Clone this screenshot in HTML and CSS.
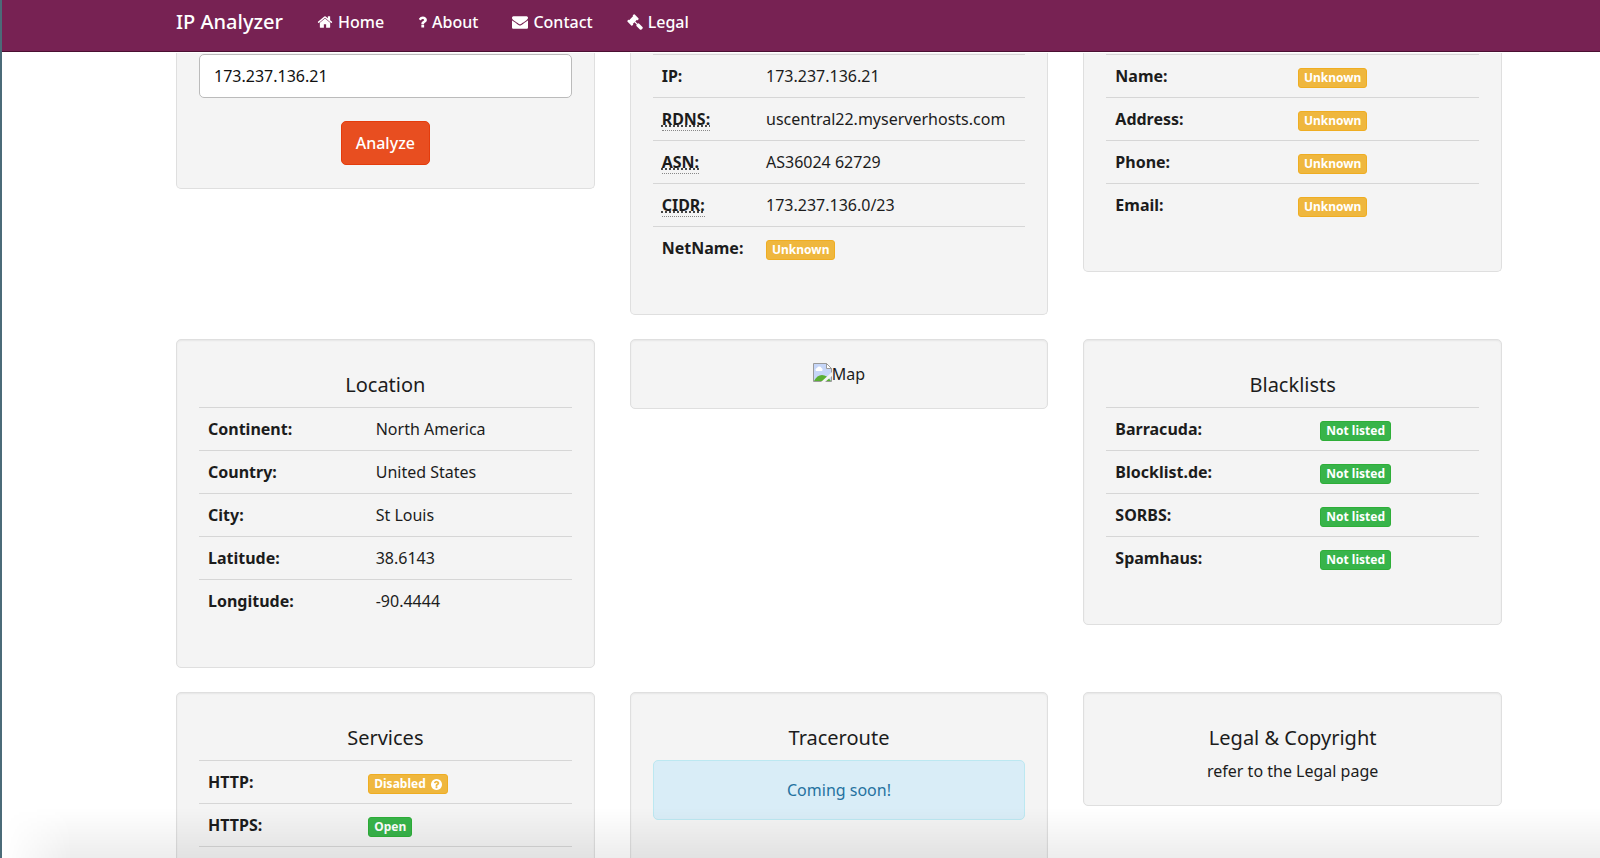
FILE: index.html
```html
<!DOCTYPE html>
<html lang="en">
<head>
<meta charset="utf-8">
<meta name="viewport" content="width=device-width, initial-scale=1">
<title>IP Analyzer</title>
<link rel="stylesheet" href="styles.css">
</head>
<body>
<header class="navbar">
  <a class="brand" href="#">IP Analyzer</a>
  <nav class="nav">
    <a class="nav-link" href="#"><svg class="icon" viewBox="0 0 1792 1792" aria-hidden="true"><path d="M1472 992v480q0 26-19 45t-45 19h-384v-384h-256v384h-384q-26 0-45-19t-19-45v-480q0-1 .5-3t.5-3l575-474 575 474q1 2 1 6zm223-69l-62 74q-8 9-21 11h-3q-13 0-21-7l-692-577-692 577q-12 8-24 7-13-2-21-11l-62-74q-8-10-7-23.500t11-21.500l719-599q32-26 76-26t76 26l244 204v-195q0-14 9-23t23-9h192q14 0 23 9t9 23v408l219 182q10 8 11 21.500t-7 23.500z"/></svg>Home</a>
    <a class="nav-link" href="#"><svg class="icon icon-narrow" viewBox="380 0 1040 1792" aria-hidden="true"><path d="M1088 1256v240q0 16-12 28t-28 12h-240q-16 0-28-12t-12-28v-240q0-16 12-28t28-12h240q16 0 28 12t12 28zm316-600q0 54-15.500 101t-35 76.500-55 59.500-57.500 43.500-61 35.500q-41 23-68.500 65t-27.500 67q0 17-12 32.500t-28 15.500h-240q-15 0-25.500-18.500t-10.500-37.500v-45q0-83 65-156.500t143-108.500q59-27 84-56t25-76q0-42-46.500-74t-107.500-32q-65 0-108 29-35 25-107 115-13 16-31 16-12 0-25-8l-164-125q-13-10-15.500-25t5.500-28q160-266 464-266 80 0 161 31t146 83 106 127.500 41 158.500z"/></svg>About</a>
    <a class="nav-link" href="#"><svg class="icon" viewBox="0 0 1792 1792" aria-hidden="true"><path d="M1792 710v794q0 66-47 113t-113 47h-1472q-66 0-113-47t-47-113v-794q44 49 101 87 362 246 497 345 57 42 92.500 65.500t94.500 48 110 24.500h2q51 0 110-24.500t94.500-48 92.500-65.500q170-123 498-345 57-39 100-87zm0-294q0 79-49 151t-122 123q-376 261-468 325-10 7-42.500 31t-54 38.500-52 32.500-57.500 27-50 9h-2q-23 0-50-9t-57.500-27-52-32.500-54-38.500-42.500-31q-91-64-262-182.500t-205-142.500q-62-42-117-115.500t-55-136.500q0-78 41.500-130t118.500-52h1472q65 0 112.500 47t47.500 113z"/></svg>Contact</a>
    <a class="nav-link" href="#"><svg class="icon" viewBox="0 0 1792 1792" aria-hidden="true"><path d="M1771 1536q0 53-37 90l-107 108q-39 37-91 37-53 0-90-37l-363-364q-38-36-38-90 0-53 43-96l-256-256-126 126q-14 14-34 14t-34-14q2 2 12.500 12t12.500 13 10 11.500 10 13.500 6 13.500 5.500 16.500 1.500 18q0 38-28 68-3 3-16.500 18t-19 20.500-18.500 16.500-22 15.500-22 9-26 4.500q-40 0-68-28l-408-408q-28-28-28-68 0-13 4.500-26t9-22 15.500-22 16.500-18.500 20.500-19 18-16.500q30-28 68-28 10 0 18 1.500t16.500 5.500 13.500 6 13.500 10 11.500 10 13 12.500 12 12.500q-14-14-14-34t14-34l348-348q14-14 34-14t34 14q-2-2-12.500-12t-12.500-13-10-11.500-10-13.500-6-13.500-5.500-16.500-1.500-18q0-38 28-68 3-3 16.500-18t19-20.500 18.500-16.500 22-15.500 22-9 26-4.500q40 0 68 28l408 408q28 28 28 68 0 13-4.500 26t-9 22-15.500 22-16.500 18.500-20.500 19-18 16.500q-30 28-68 28-10 0-18-1.500t-16.500-5.500-13.500-6-13.500-10-11.500-10-13-12.500-12-12.500q14 14 14 34t-14 34l-126 126 256 256q43-43 96-43 52 0 91 37l363 363q37 39 37 91z"/></svg>Legal</a>
  </nav>
</header>

<main class="cards">
  <form class="card card-cut analyze">
    <input class="ip-input" type="text" aria-label="IP address" value="173.237.136.21">
    <button class="btn" type="button">Analyze</button>
  </form>

  <section class="card card-cut">
    <table class="info cols-network">
      <tr><th scope="row">IP:</th><td>173.237.136.21</td></tr>
      <tr><th scope="row"><abbr title="Reverse DNS">RDNS:</abbr></th><td>uscentral22.myserverhosts.com</td></tr>
      <tr><th scope="row"><abbr title="Autonomous System Number">ASN:</abbr></th><td>AS36024 62729</td></tr>
      <tr><th scope="row"><abbr title="Classless Inter-Domain Routing">CIDR:</abbr></th><td>173.237.136.0/23</td></tr>
      <tr><th scope="row">NetName:</th><td><span class="label label-warning">Unknown</span></td></tr>
    </table>
  </section>

  <section class="card card-cut">
    <table class="info cols-contact">
      <tr><th scope="row">Name:</th><td><span class="label label-warning">Unknown</span></td></tr>
      <tr><th scope="row">Address:</th><td><span class="label label-warning">Unknown</span></td></tr>
      <tr><th scope="row">Phone:</th><td><span class="label label-warning">Unknown</span></td></tr>
      <tr><th scope="row">Email:</th><td><span class="label label-warning">Unknown</span></td></tr>
    </table>
  </section>

  <section class="card">
    <h2 class="title">Location</h2>
    <table class="info cols-location">
      <tr><th scope="row">Continent:</th><td>North America</td></tr>
      <tr><th scope="row">Country:</th><td>United States</td></tr>
      <tr><th scope="row">City:</th><td>St Louis</td></tr>
      <tr><th scope="row">Latitude:</th><td>38.6143</td></tr>
      <tr><th scope="row">Longitude:</th><td>-90.4444</td></tr>
    </table>
  </section>

  <section class="card">
    <div class="map">
      <svg class="map-icon" viewBox="0 0 19 19" aria-hidden="true">
        <path fill="#c6d6f8" stroke="#9a9a9a" d="M.5.500h13l5 5v13H.5z"/>
        <path fill="#fff" d="M3 8a2 2 0 0 1 1-3 2.500 2.500 0 0 1 4.500 0A1.800 1.800 0 0 1 9 8z"/>
        <path fill="#5aaf34" d="M1 18q3-6 8-6t9 6z"/>
        <path fill="#f4f4f4" d="M19 9v4l-7 6H8z"/>
        <path fill="#fff" stroke="#9a9a9a" d="M13.500.500v5h5z"/>
      </svg><span>Map</span>
    </div>
  </section>

  <section class="card">
    <h2 class="title">Blacklists</h2>
    <table class="info cols-blacklist">
      <tr><th scope="row">Barracuda:</th><td><span class="label label-success">Not listed</span></td></tr>
      <tr><th scope="row">Blocklist.de:</th><td><span class="label label-success">Not listed</span></td></tr>
      <tr><th scope="row">SORBS:</th><td><span class="label label-success">Not listed</span></td></tr>
      <tr><th scope="row">Spamhaus:</th><td><span class="label label-success">Not listed</span></td></tr>
    </table>
  </section>

  <section class="card">
    <h2 class="title">Services</h2>
    <table class="info cols-services">
      <tr><th scope="row">HTTP:</th><td><span class="label label-warning">Disabled <svg class="help" viewBox="128 128 1536 1536" aria-hidden="true"><path d="M1024 1376v-192q0-14-9-23t-23-9h-192q-14 0-23 9t-9 23v192q0 14 9 23t23 9h192q14 0 23-9t9-23zm256-672q0-88-55.500-163t-138.500-116-170-41q-243 0-371 213-15 24 8 42l132 100q7 6 19 6 16 0 25-12 53-68 86-92 34-24 86-24 48 0 85.500 26t37.500 59q0 38-20 61t-68 45q-63 28-115.500 86.500t-52.500 125.500v36q0 14 9 23t23 9h192q14 0 23-9t9-23q0-19 21.500-49.500t54.500-49.500q32-18 49-28.500t46-35 44.500-48 28-60.500 12.500-81zm384 192q0 209-103 385.500t-279.500 279.500-385.500 103-385.500-103-279.500-279.500-103-385.500 103-385.500 279.500-279.500 385.500-103 385.500 103 279.500 279.500 103 385.500z"/></svg></span></td></tr>
      <tr><th scope="row">HTTPS:</th><td><span class="label label-success">Open</span></td></tr>
      <tr><td></td><td></td></tr>
    </table>
  </section>

  <section class="card">
    <h2 class="title">Traceroute</h2>
    <p class="alert">Coming soon!</p>
  </section>

  <section class="card">
    <h2 class="title">Legal &amp; Copyright</h2>
    <p class="note">refer to the Legal page</p>
  </section>
</main>
</body>
</html>
```
FILE: styles.css
```css
* { box-sizing: border-box; }

body {
  margin: 0;
  height: 100vh;
  overflow: hidden;
  border-left: 2px solid #4b6b78;
  background: #fff;
  color: #1c1c1c;
  font: 16px/22px "Noto Sans", sans-serif;
}

/* shade along the window's lower edge */
body::after {
  content: "";
  position: fixed;
  left: 2px;
  right: 0;
  bottom: 0;
  height: 50px;
  background: linear-gradient(to bottom, rgba(0, 0, 0, 0), rgba(0, 0, 0, .07));
  -webkit-mask-image: linear-gradient(to right, transparent, #000 70px);
  mask-image: linear-gradient(to right, transparent, #000 70px);
  pointer-events: none;
}

.navbar {
  display: flex;
  align-items: center;
  gap: 34px;
  height: 52px;
  padding: 0 98px 7px 174px;
  background: #772253;
  border-bottom: 1px solid #4a0f31;
}

.brand,
.nav-link {
  color: #fff;
  text-decoration: none;
  font-weight: 500;
}

.brand { font-size: 20px; }

.nav { display: flex; gap: 34px; }

.nav-link {
  display: flex;
  align-items: center;
  gap: 5px;
}

.icon {
  width: 16px;
  height: 16px;
  fill: currentColor;
}

.icon-narrow { width: 9px; }

.cards {
  display: grid;
  grid-template-columns: repeat(3, minmax(0, 1fr));
  align-items: start;
  gap: 24px 35px;
  padding: 1px 98px 0 174px;
}

.card {
  padding: 23px 22px;
  background: #f4f4f4;
  border: 1px solid #dfdfdf;
  border-radius: 5px;
  box-shadow: inset 0 1px 2px rgba(0, 0, 0, .06);
}

.card-cut {
  padding-top: 1px;
  border-top: 0;
  border-radius: 0 0 5px 5px;
  box-shadow: none;
}

.analyze {
  display: flex;
  flex-direction: column;
  align-items: center;
  gap: 23px;
}

.ip-input {
  width: 100%;
  height: 44px;
  padding: 0 14px;
  border: 1px solid #bbb;
  border-radius: 5px;
  background: #fff;
  color: #111;
  font: inherit;
}

.btn {
  height: 44px;
  padding: 0 14px;
  border: 1px solid #e43c0c;
  border-radius: 5px;
  background: #e84e20;
  color: #fff;
  font: inherit;
  font-weight: 500;
}

.title {
  margin: 10px 0 11px;
  text-align: center;
  font-size: 20px;
  line-height: 23px;
  font-weight: 400;
}

.info {
  width: 100%;
  margin-bottom: 22px;
  border-collapse: separate;
  border-spacing: 0;
  table-layout: fixed;
}

.info th,
.info td {
  height: 43px;
  padding: 10px 9px 8px;
  border-top: 1px solid #d6d6d6;
  text-align: left;
  vertical-align: top;
  white-space: nowrap;
}

.info th { font-weight: 700; }

.cols-network th { width: 28%; }
.cols-contact th { width: 49%; }
.cols-location th { width: 45%; }
.cols-blacklist th { width: 55%; }
.cols-services th { width: 43%; }

abbr[title] {
  border-bottom: 1px dotted #888;
  text-decoration: underline dotted;
}

.label {
  display: inline-flex;
  align-items: center;
  gap: 5px;
  height: 20px;
  margin-top: 3px;
  padding: 0 5px;
  border-radius: 3px;
  color: #fff;
  font-size: 12px;
  line-height: 20px;
  font-weight: 700;
  vertical-align: top;
}

.label-warning { background: #efb73e; border: 1px solid #efad22; }
.label-success { background: #38b44a; border: 1px solid #2eae38; }

.help {
  width: 11px;
  height: 11px;
  fill: currentColor;
}

.map {
  display: flex;
  justify-content: center;
  align-items: flex-start;
}

.map-icon { width: 19px; height: 19px; }

.alert {
  margin: 0 0 23px;
  padding: 18px;
  background: #d9edf7;
  border: 1px solid #bce8f1;
  border-radius: 5px;
  color: #2572a0;
  text-align: center;
}

.note {
  margin: 0;
  text-align: center;
}
```
